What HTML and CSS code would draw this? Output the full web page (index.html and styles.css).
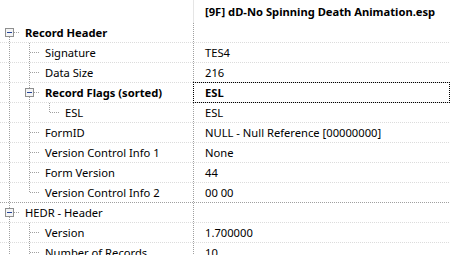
FILE: index.html
```html
<!DOCTYPE html>
<html>
<head>
<meta charset="utf-8">
<link rel="stylesheet" href="styles.css">
</head>
<body>
<svg class="defs" width="0" height="0">
  <defs>
    <symbol id="pipe" viewBox="0 0 20 20"><line class="dl" x1="9.5" y1="0" x2="9.5" y2="20"/></symbol>
    <symbol id="tee" viewBox="0 0 20 20"><line class="dl" x1="9.5" y1="0" x2="9.5" y2="20"/><line class="dl" x1="10" y1="9.5" x2="20" y2="9.5"/></symbol>
    <symbol id="last" viewBox="0 0 20 20"><line class="dl" x1="9.5" y1="0" x2="9.5" y2="10"/><line class="dl" x1="10" y1="9.5" x2="20" y2="9.5"/></symbol>
    <symbol id="boxfirst" viewBox="0 0 20 20"><line class="dl" x1="9.5" y1="14" x2="9.5" y2="20"/><line class="dl" x1="14" y1="9.5" x2="20" y2="9.5"/><rect class="bx" x="5.5" y="5.5" width="8" height="8"/><line class="mn" x1="7" y1="9.5" x2="12" y2="9.5"/></symbol>
    <symbol id="boxtee" viewBox="0 0 20 20"><line class="dl" x1="9.5" y1="0" x2="9.5" y2="5"/><line class="dl" x1="9.5" y1="14" x2="9.5" y2="20"/><line class="dl" x1="14" y1="9.5" x2="20" y2="9.5"/><rect class="bx" x="5.5" y="5.5" width="8" height="8"/><line class="mn" x1="7" y1="9.5" x2="12" y2="9.5"/></symbol>
  </defs>
</svg>
<div class="tree">
  <div class="head">
    <div class="hl"></div>
    <div class="hv">[9F] dD-No Spinning Death Animation.esp</div>
  </div>
  <div class="row">
    <div class="lab"><svg class="g"><use href="#boxfirst"/></svg><span class="t b">Record Header</span></div>
    <div class="val"></div>
  </div>
  <div class="row">
    <div class="lab"><svg class="g"><use href="#pipe"/></svg><svg class="g"><use href="#tee"/></svg><span class="t">Signature</span></div>
    <div class="val">TES4</div>
  </div>
  <div class="row">
    <div class="lab"><svg class="g"><use href="#pipe"/></svg><svg class="g"><use href="#tee"/></svg><span class="t">Data Size</span></div>
    <div class="val">216</div>
  </div>
  <div class="row">
    <div class="lab"><svg class="g"><use href="#pipe"/></svg><svg class="g"><use href="#boxtee"/></svg><span class="t b">Record Flags (sorted)</span></div>
    <div class="val b focus">ESL</div>
  </div>
  <div class="row">
    <div class="lab"><svg class="g"><use href="#pipe"/></svg><svg class="g"><use href="#pipe"/></svg><svg class="g"><use href="#last"/></svg><span class="t">ESL</span></div>
    <div class="val">ESL</div>
  </div>
  <div class="row">
    <div class="lab"><svg class="g"><use href="#pipe"/></svg><svg class="g"><use href="#tee"/></svg><span class="t">FormID</span></div>
    <div class="val">NULL - Null Reference [00000000]</div>
  </div>
  <div class="row">
    <div class="lab"><svg class="g"><use href="#pipe"/></svg><svg class="g"><use href="#tee"/></svg><span class="t">Version Control Info 1</span></div>
    <div class="val">None</div>
  </div>
  <div class="row">
    <div class="lab"><svg class="g"><use href="#pipe"/></svg><svg class="g"><use href="#tee"/></svg><span class="t">Form Version</span></div>
    <div class="val">44</div>
  </div>
  <div class="row sep">
    <div class="lab"><svg class="g"><use href="#pipe"/></svg><svg class="g"><use href="#last"/></svg><span class="t">Version Control Info 2</span></div>
    <div class="val">00 00</div>
  </div>
  <div class="row">
    <div class="lab"><svg class="g"><use href="#boxtee"/></svg><span class="t">HEDR - Header</span></div>
    <div class="val"></div>
  </div>
  <div class="row">
    <div class="lab"><svg class="g"><use href="#pipe"/></svg><svg class="g"><use href="#tee"/></svg><span class="t">Version</span></div>
    <div class="val">1.700000</div>
  </div>
  <div class="row">
    <div class="lab"><svg class="g"><use href="#pipe"/></svg><svg class="g"><use href="#tee"/></svg><span class="t">Number of Records</span></div>
    <div class="val">10</div>
  </div>
</div>
</body>
</html>
```
FILE: styles.css
```css
html, body {
  margin: 0;
  padding: 0;
  background: #fff;
  overflow: hidden;
}
body {
  width: 450px;
  height: 255px;
  font-family: "Noto Sans", "Open Sans", sans-serif;
  font-size: 11.2px;
  color: #000;
}
.defs {
  position: absolute;
  width: 0;
  height: 0;
}
.dl {
  stroke: #a0a0a0;
  stroke-width: 1;
  stroke-dasharray: 1 1;
  shape-rendering: crispEdges;
}
.bx {
  fill: #f4f4f4;
  stroke: #8e8f8f;
  stroke-width: 1;
  shape-rendering: crispEdges;
}
.mn {
  stroke: #23449a;
  stroke-width: 1;
  shape-rendering: crispEdges;
}
.tree {
  display: flex;
  flex-direction: column;
}
.head {
  display: grid;
  grid-template-columns: 193px 1fr;
  height: 23px;
}
.hv {
  border-left: 1px solid #e5e5e5;
  padding-left: 11px;
  font-weight: bold;
  line-height: 23px;
  white-space: nowrap;
}
.row {
  display: grid;
  grid-template-columns: 193px 1fr;
  height: 20px;
  background-image: linear-gradient(to right, #dcdcdc 50%, transparent 50%);
  background-size: 2px 1px;
  background-repeat: repeat-x;
  background-position: left bottom;
}
.row.sep {
  background-image: linear-gradient(to right, #a0a0a0 50%, transparent 50%);
}
.lab {
  display: flex;
  align-items: flex-start;
  white-space: nowrap;
  overflow: hidden;
}
.g {
  width: 20px;
  height: 20px;
  flex: none;
  display: block;
}
.t {
  padding-left: 5px;
  line-height: 19px;
}
.b {
  font-weight: bold;
}
.val {
  padding-left: 12px;
  line-height: 19px;
  white-space: nowrap;
  background-image: linear-gradient(#a0a0a0 50%, transparent 50%);
  background-size: 1px 2px;
  background-repeat: repeat-y;
  background-position: left top;
}
.focus {
  outline: 1px dotted #000;
  outline-offset: -1px;
  margin-top: -1px;
  height: 21px;
  line-height: 21px;
}
```
